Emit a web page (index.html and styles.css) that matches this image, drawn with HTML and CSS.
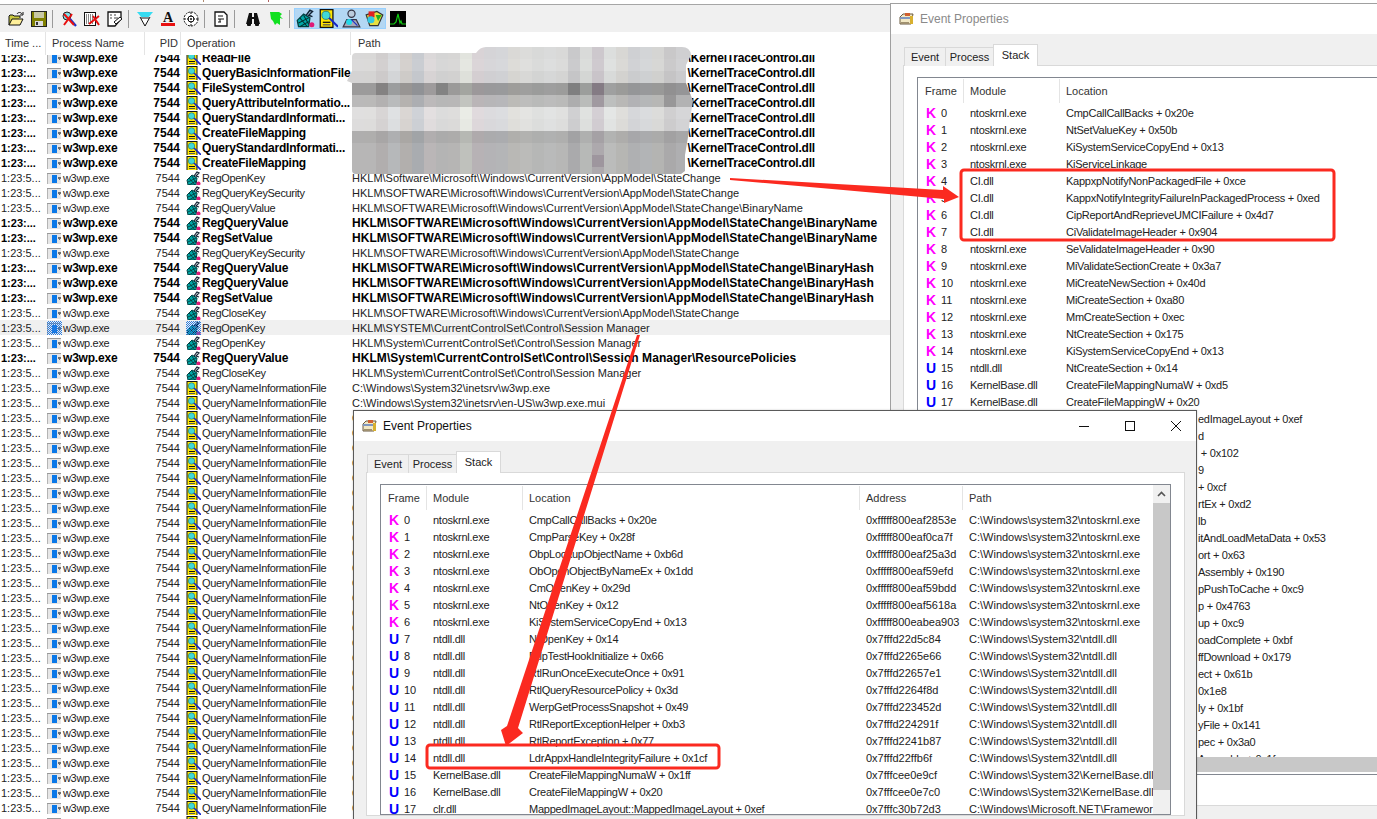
FILE: index.html
```html
<!DOCTYPE html>
<html lang="en">
<head>
<meta charset="utf-8">
<title>Process Monitor</title>
<link rel="stylesheet" href="styles.css">
</head>
<body>
<svg class="defs" aria-hidden="true">
  <symbol id="i-proc" viewBox="0 0 14 11"><rect width="14" height="11" fill="#e6e6e6"/><rect width="14" height="1" fill="#9a9a9a"/><rect y="1" width="1" height="10" fill="#b4b4b4"/><rect x="5" y="2" width="5" height="8" fill="#0a78e8"/><rect x="11" y="4" width="3" height="2" fill="#707070"/><rect x="12" y="6" width="1" height="1" fill="#707070"/></symbol>
  <symbol id="i-reg" viewBox="0 0 15 15"><path d="M1 9 6 4l5 3-1 7H2z" fill="#00a8a8" stroke="#024040"/><path d="M3 7l6 7M6 5l4 7M2 11l8-4M3 14l7-4" stroke="#023030" stroke-width=".8"/><path d="M8 5l3-4 2 1-3 3 3 1" fill="none" stroke="#123" stroke-width="1.2"/><circle cx="12.5" cy="12.5" r="2" fill="#e01a78"/></symbol>
  <symbol id="i-file" viewBox="0 0 15 15"><rect x="1" y=".5" width="10" height="14" fill="#ffe600" stroke="#111"/><circle cx="5.5" cy="5" r="3.2" fill="#3fd8d8" stroke="#2a7a70" stroke-width=".7"/><rect x="3" y="10" width="6" height="1" fill="#111"/><rect x="3" y="12" width="6" height="1" fill="#555"/><path d="M8 7l7 7" stroke="#1426c8" stroke-width="1.6"/></symbol>
  <symbol id="t-open" viewBox="0 0 16 16"><path d="M1 14V5l1-1h3l1 1h6v2" fill="#c9c840" stroke="#111"/><path d="M1 14l3-6h11l-3 6z" fill="#fff09a" stroke="#111"/><path d="M9 3c1-2 4-2 5 0" fill="none" stroke="#111"/><path d="M15 1v3h-3" fill="none" stroke="#111"/></symbol>
  <symbol id="t-save" viewBox="0 0 16 16"><rect x=".5" y=".5" width="15" height="15" fill="#808000" stroke="#222"/><rect x="3" y="1" width="10" height="6" fill="#c8c8a4"/><rect x="4" y="10" width="8" height="5" fill="#dcdcdc"/><rect x="5" y="11" width="2" height="3" fill="#333"/></symbol>
  <symbol id="t-capture" viewBox="0 0 16 16"><circle cx="6" cy="5" r="4" fill="#7fe0e8" stroke="#222"/><path d="M9 8l6 7" stroke="#1a30c8" stroke-width="2.2"/><path d="M3 3l10 11M11 3L3 14" stroke="#e81010" stroke-width="2"/></symbol>
  <symbol id="t-scroll" viewBox="0 0 16 16"><rect x=".5" y="1.5" width="11" height="13" fill="#fff" stroke="#111"/><path d="M2 4h8M2 6h8M2 8h8M2 10h7M2 12h7" stroke="#111" stroke-dasharray="1 1"/><path d="M5 13l10-8M9 5l6 9" stroke="#e81010" stroke-width="2"/></symbol>
  <symbol id="t-clear" viewBox="0 0 16 16"><path d="M1 1h13v7l-6 7H1z" fill="#fff" stroke="#111" stroke-width="1.3"/><path d="M3 4h2M7 4h2M3 7h2M7 7h4" stroke="#444"/><path d="M7 11l6-5 2 2-6 5z" fill="#fff" stroke="#111"/></symbol>
  <symbol id="t-filter" viewBox="0 0 16 16"><path d="M0 1h16l-5 6H5z" fill="#36dcf2"/><path d="M3 6l5 9 5-9" fill="#fff" stroke="#111"/><path d="M4 7h8" stroke="#111"/></symbol>
  <symbol id="t-high" viewBox="0 0 16 16"><text x="8" y="11" text-anchor="middle" class="svg-a">A</text><rect x="1" y="12" width="14" height="3" fill="#e81010"/></symbol>
  <symbol id="t-target" viewBox="0 0 16 16"><circle cx="8" cy="8" r="7" fill="#fff" stroke="#111" stroke-dasharray="2 1"/><circle cx="8" cy="8" r="3" fill="none" stroke="#111"/><path d="M8 1v14M1 8h14" stroke="#111" stroke-dasharray="2 1"/></symbol>
  <symbol id="t-doc" viewBox="0 0 16 16"><path d="M2 1h9l3 3v11H2z" fill="#fff" stroke="#111" stroke-width="1.3"/><path d="M5 5h5M5 8h6M5 11h3M7 8v3" stroke="#111"/></symbol>
  <symbol id="t-bino" viewBox="0 0 16 16"><path d="M4 2h3v4h2V2h3l3 11h-6V8H7v5H1z" fill="#111"/><rect x="2" y="12" width="4" height="3" fill="#111" rx="1"/><rect x="10" y="12" width="4" height="3" fill="#111" rx="1"/></symbol>
  <symbol id="t-jump" viewBox="0 0 16 16"><path d="M2 1h9l3 2-2 2 3 3-3-1v7l-3-2-2 2-2-4-2-2z" fill="#10e020"/></symbol>
  <symbol id="t-net" viewBox="0 0 16 16"><path d="M1 15l3-6h8l3 6z" fill="#a8a8b8" stroke="#334"/><rect x="5" y="1" width="6" height="6" rx="3" fill="#bcd" stroke="#334"/><circle cx="6" cy="11" r="2.5" fill="#22d8e8"/><path d="M8 9l5 5" stroke="#1a30c8"/></symbol>
  <symbol id="t-proc" viewBox="0 0 16 16"><path d="M1 5l9-3 5 3-4 9H4z" fill="#e8e040" stroke="#333"/><rect x="3" y="2" width="5" height="5" fill="#e02020"/><circle cx="5" cy="9" r="3" fill="#30c8e0"/><path d="M9 5l5 0-3 5z" fill="#20b020"/></symbol>
  <symbol id="t-graph" viewBox="0 0 16 16"><rect width="16" height="16" fill="#000"/><path d="M0 13h4l2-2 2-8 2 9 1-2 1 3h4" fill="none" stroke="#10c810" stroke-width="1.2"/></symbol>
  <symbol id="i-title" viewBox="0 0 15 13"><path d="M1 4l3-3h10l-2 10H1z" fill="#f2e8c4" stroke="#6a5a40"/><rect x="1" y="4" width="10" height="2" fill="#8098c0"/><rect x="6" y="0" width="5" height="3" fill="#d06030"/><rect x="11" y="3" width="3" height="8" fill="#d8b030"/><rect x="2" y="9" width="8" height="2" fill="#a09070"/></symbol>
</svg>

<div class="desk">
  <section class="procmon">
    <div class="strip"><i class="mark m1"></i><i class="mark m2"></i></div>
    <div class="toolbar">
      <span class="btn"><svg class="tb"><use href="#t-open"/></svg></span>
      <span class="btn"><svg class="tb"><use href="#t-save"/></svg></span>
      <i class="sep"></i>
      <span class="btn"><svg class="tb"><use href="#t-capture"/></svg></span>
      <span class="btn"><svg class="tb"><use href="#t-scroll"/></svg></span>
      <span class="btn"><svg class="tb"><use href="#t-clear"/></svg></span>
      <i class="sep"></i>
      <span class="btn"><svg class="tb"><use href="#t-filter"/></svg></span>
      <span class="btn"><svg class="tb"><use href="#t-high"/></svg></span>
      <span class="btn"><svg class="tb"><use href="#t-target"/></svg></span>
      <i class="sep"></i>
      <span class="btn"><svg class="tb"><use href="#t-doc"/></svg></span>
      <i class="sep sep-wide"></i>
      <span class="btn"><svg class="tb"><use href="#t-bino"/></svg></span>
      <span class="btn"><svg class="tb"><use href="#t-jump"/></svg></span>
      <i class="sep"></i>
      <span class="group">
        <span class="btn on"><svg class="tb"><use href="#i-reg"/></svg></span>
        <span class="btn on"><svg class="tb"><use href="#i-file"/></svg></span>
        <span class="btn on"><svg class="tb"><use href="#t-net"/></svg></span>
        <span class="btn on"><svg class="tb"><use href="#t-proc"/></svg></span>
      </span>
      <span class="btn"><svg class="tb"><use href="#t-graph"/></svg></span>
    </div>
    <div class="head">
      <span class="h-time">Time ...</span><span class="h-proc">Process Name</span><span class="h-pid">PID</span><span class="h-op">Operation</span><span class="h-path">Path</span>
    </div>
    <div class="list">
      <div class="rows">
        <div class="row b"><span class="time">1:23:...</span><span class="proc"><svg class="ic-p"><use href="#i-proc"/></svg>w3wp.exe</span><span class="pid">7544</span><span class="op"><svg class="ic-o"><use href="#i-file"/></svg>ReadFile</span><span class="path tail">\KernelTraceControl.dll</span></div>
        <div class="row b"><span class="time">1:23:...</span><span class="proc"><svg class="ic-p"><use href="#i-proc"/></svg>w3wp.exe</span><span class="pid">7544</span><span class="op"><svg class="ic-o"><use href="#i-file"/></svg>QueryBasicInformationFile</span><span class="path tail">\KernelTraceControl.dll</span></div>
        <div class="row b"><span class="time">1:23:...</span><span class="proc"><svg class="ic-p"><use href="#i-proc"/></svg>w3wp.exe</span><span class="pid">7544</span><span class="op"><svg class="ic-o"><use href="#i-file"/></svg>FileSystemControl</span><span class="path tail">\KernelTraceControl.dll</span></div>
        <div class="row b"><span class="time">1:23:...</span><span class="proc"><svg class="ic-p"><use href="#i-proc"/></svg>w3wp.exe</span><span class="pid">7544</span><span class="op"><svg class="ic-o"><use href="#i-file"/></svg>QueryAttributeInformatio...</span><span class="path tail">\KernelTraceControl.dll</span></div>
        <div class="row b"><span class="time">1:23:...</span><span class="proc"><svg class="ic-p"><use href="#i-proc"/></svg>w3wp.exe</span><span class="pid">7544</span><span class="op"><svg class="ic-o"><use href="#i-file"/></svg>QueryStandardInformati...</span><span class="path tail">\KernelTraceControl.dll</span></div>
        <div class="row b"><span class="time">1:23:...</span><span class="proc"><svg class="ic-p"><use href="#i-proc"/></svg>w3wp.exe</span><span class="pid">7544</span><span class="op"><svg class="ic-o"><use href="#i-file"/></svg>CreateFileMapping</span><span class="path tail">\KernelTraceControl.dll</span></div>
        <div class="row b"><span class="time">1:23:...</span><span class="proc"><svg class="ic-p"><use href="#i-proc"/></svg>w3wp.exe</span><span class="pid">7544</span><span class="op"><svg class="ic-o"><use href="#i-file"/></svg>QueryStandardInformati...</span><span class="path tail">\KernelTraceControl.dll</span></div>
        <div class="row b"><span class="time">1:23:...</span><span class="proc"><svg class="ic-p"><use href="#i-proc"/></svg>w3wp.exe</span><span class="pid">7544</span><span class="op"><svg class="ic-o"><use href="#i-file"/></svg>CreateFileMapping</span><span class="path tail">\KernelTraceControl.dll</span></div>
        <div class="row"><span class="time">1:23:5...</span><span class="proc"><svg class="ic-p"><use href="#i-proc"/></svg>w3wp.exe</span><span class="pid">7544</span><span class="op"><svg class="ic-o"><use href="#i-reg"/></svg>RegOpenKey</span><span class="path">HKLM\Software\Microsoft\Windows\CurrentVersion\AppModel\StateChange</span></div>
        <div class="row"><span class="time">1:23:5...</span><span class="proc"><svg class="ic-p"><use href="#i-proc"/></svg>w3wp.exe</span><span class="pid">7544</span><span class="op"><svg class="ic-o"><use href="#i-reg"/></svg>RegQueryKeySecurity</span><span class="path">HKLM\SOFTWARE\Microsoft\Windows\CurrentVersion\AppModel\StateChange</span></div>
        <div class="row"><span class="time">1:23:5...</span><span class="proc"><svg class="ic-p"><use href="#i-proc"/></svg>w3wp.exe</span><span class="pid">7544</span><span class="op"><svg class="ic-o"><use href="#i-reg"/></svg>RegQueryValue</span><span class="path">HKLM\SOFTWARE\Microsoft\Windows\CurrentVersion\AppModel\StateChange\BinaryName</span></div>
        <div class="row b"><span class="time">1:23:...</span><span class="proc"><svg class="ic-p"><use href="#i-proc"/></svg>w3wp.exe</span><span class="pid">7544</span><span class="op"><svg class="ic-o"><use href="#i-reg"/></svg>RegQueryValue</span><span class="path">HKLM\SOFTWARE\Microsoft\Windows\CurrentVersion\AppModel\StateChange\BinaryName</span></div>
        <div class="row b"><span class="time">1:23:...</span><span class="proc"><svg class="ic-p"><use href="#i-proc"/></svg>w3wp.exe</span><span class="pid">7544</span><span class="op"><svg class="ic-o"><use href="#i-reg"/></svg>RegSetValue</span><span class="path">HKLM\SOFTWARE\Microsoft\Windows\CurrentVersion\AppModel\StateChange\BinaryName</span></div>
        <div class="row"><span class="time">1:23:5...</span><span class="proc"><svg class="ic-p"><use href="#i-proc"/></svg>w3wp.exe</span><span class="pid">7544</span><span class="op"><svg class="ic-o"><use href="#i-reg"/></svg>RegQueryKeySecurity</span><span class="path">HKLM\SOFTWARE\Microsoft\Windows\CurrentVersion\AppModel\StateChange</span></div>
        <div class="row b"><span class="time">1:23:...</span><span class="proc"><svg class="ic-p"><use href="#i-proc"/></svg>w3wp.exe</span><span class="pid">7544</span><span class="op"><svg class="ic-o"><use href="#i-reg"/></svg>RegQueryValue</span><span class="path">HKLM\SOFTWARE\Microsoft\Windows\CurrentVersion\AppModel\StateChange\BinaryHash</span></div>
        <div class="row b"><span class="time">1:23:...</span><span class="proc"><svg class="ic-p"><use href="#i-proc"/></svg>w3wp.exe</span><span class="pid">7544</span><span class="op"><svg class="ic-o"><use href="#i-reg"/></svg>RegQueryValue</span><span class="path">HKLM\SOFTWARE\Microsoft\Windows\CurrentVersion\AppModel\StateChange\BinaryHash</span></div>
        <div class="row b"><span class="time">1:23:...</span><span class="proc"><svg class="ic-p"><use href="#i-proc"/></svg>w3wp.exe</span><span class="pid">7544</span><span class="op"><svg class="ic-o"><use href="#i-reg"/></svg>RegSetValue</span><span class="path">HKLM\SOFTWARE\Microsoft\Windows\CurrentVersion\AppModel\StateChange\BinaryHash</span></div>
        <div class="row"><span class="time">1:23:5...</span><span class="proc"><svg class="ic-p"><use href="#i-proc"/></svg>w3wp.exe</span><span class="pid">7544</span><span class="op"><svg class="ic-o"><use href="#i-reg"/></svg>RegCloseKey</span><span class="path">HKLM\SOFTWARE\Microsoft\Windows\CurrentVersion\AppModel\StateChange</span></div>
        <div class="row hl"><span class="time">1:23:5...</span><span class="proc"><span class="dither"><svg class="ic-p"><use href="#i-proc"/></svg></span>w3wp.exe</span><span class="pid">7544</span><span class="op"><span class="dither"><svg class="ic-o"><use href="#i-reg"/></svg></span>RegOpenKey</span><span class="path">HKLM\SYSTEM\CurrentControlSet\Control\Session Manager</span></div>
        <div class="row"><span class="time">1:23:5...</span><span class="proc"><svg class="ic-p"><use href="#i-proc"/></svg>w3wp.exe</span><span class="pid">7544</span><span class="op"><svg class="ic-o"><use href="#i-reg"/></svg>RegOpenKey</span><span class="path">HKLM\System\CurrentControlSet\Control\Session Manager</span></div>
        <div class="row b"><span class="time">1:23:...</span><span class="proc"><svg class="ic-p"><use href="#i-proc"/></svg>w3wp.exe</span><span class="pid">7544</span><span class="op"><svg class="ic-o"><use href="#i-reg"/></svg>RegQueryValue</span><span class="path">HKLM\System\CurrentControlSet\Control\Session Manager\ResourcePolicies</span></div>
        <div class="row"><span class="time">1:23:5...</span><span class="proc"><svg class="ic-p"><use href="#i-proc"/></svg>w3wp.exe</span><span class="pid">7544</span><span class="op"><svg class="ic-o"><use href="#i-reg"/></svg>RegCloseKey</span><span class="path">HKLM\System\CurrentControlSet\Control\Session Manager</span></div>
        <div class="row"><span class="time">1:23:5...</span><span class="proc"><svg class="ic-p"><use href="#i-proc"/></svg>w3wp.exe</span><span class="pid">7544</span><span class="op"><svg class="ic-o"><use href="#i-file"/></svg>QueryNameInformationFile</span><span class="path">C:\Windows\System32\inetsrv\w3wp.exe</span></div>
        <div class="row"><span class="time">1:23:5...</span><span class="proc"><svg class="ic-p"><use href="#i-proc"/></svg>w3wp.exe</span><span class="pid">7544</span><span class="op"><svg class="ic-o"><use href="#i-file"/></svg>QueryNameInformationFile</span><span class="path">C:\Windows\System32\inetsrv\en-US\w3wp.exe.mui</span></div>
        <div class="row"><span class="time">1:23:5...</span><span class="proc"><svg class="ic-p"><use href="#i-proc"/></svg>w3wp.exe</span><span class="pid">7544</span><span class="op"><svg class="ic-o"><use href="#i-file"/></svg>QueryNameInformationFile</span><span class="path">C:</span></div>
        <div class="row"><span class="time">1:23:5...</span><span class="proc"><svg class="ic-p"><use href="#i-proc"/></svg>w3wp.exe</span><span class="pid">7544</span><span class="op"><svg class="ic-o"><use href="#i-file"/></svg>QueryNameInformationFile</span><span class="path">C:</span></div>
        <div class="row"><span class="time">1:23:5...</span><span class="proc"><svg class="ic-p"><use href="#i-proc"/></svg>w3wp.exe</span><span class="pid">7544</span><span class="op"><svg class="ic-o"><use href="#i-file"/></svg>QueryNameInformationFile</span><span class="path">C:</span></div>
        <div class="row"><span class="time">1:23:5...</span><span class="proc"><svg class="ic-p"><use href="#i-proc"/></svg>w3wp.exe</span><span class="pid">7544</span><span class="op"><svg class="ic-o"><use href="#i-file"/></svg>QueryNameInformationFile</span><span class="path">C:</span></div>
        <div class="row"><span class="time">1:23:5...</span><span class="proc"><svg class="ic-p"><use href="#i-proc"/></svg>w3wp.exe</span><span class="pid">7544</span><span class="op"><svg class="ic-o"><use href="#i-file"/></svg>QueryNameInformationFile</span><span class="path">C:</span></div>
        <div class="row"><span class="time">1:23:5...</span><span class="proc"><svg class="ic-p"><use href="#i-proc"/></svg>w3wp.exe</span><span class="pid">7544</span><span class="op"><svg class="ic-o"><use href="#i-file"/></svg>QueryNameInformationFile</span><span class="path">C:</span></div>
        <div class="row"><span class="time">1:23:5...</span><span class="proc"><svg class="ic-p"><use href="#i-proc"/></svg>w3wp.exe</span><span class="pid">7544</span><span class="op"><svg class="ic-o"><use href="#i-file"/></svg>QueryNameInformationFile</span><span class="path">C:</span></div>
        <div class="row"><span class="time">1:23:5...</span><span class="proc"><svg class="ic-p"><use href="#i-proc"/></svg>w3wp.exe</span><span class="pid">7544</span><span class="op"><svg class="ic-o"><use href="#i-file"/></svg>QueryNameInformationFile</span><span class="path">C:</span></div>
        <div class="row"><span class="time">1:23:5...</span><span class="proc"><svg class="ic-p"><use href="#i-proc"/></svg>w3wp.exe</span><span class="pid">7544</span><span class="op"><svg class="ic-o"><use href="#i-file"/></svg>QueryNameInformationFile</span><span class="path">C:</span></div>
        <div class="row"><span class="time">1:23:5...</span><span class="proc"><svg class="ic-p"><use href="#i-proc"/></svg>w3wp.exe</span><span class="pid">7544</span><span class="op"><svg class="ic-o"><use href="#i-file"/></svg>QueryNameInformationFile</span><span class="path">C:</span></div>
        <div class="row"><span class="time">1:23:5...</span><span class="proc"><svg class="ic-p"><use href="#i-proc"/></svg>w3wp.exe</span><span class="pid">7544</span><span class="op"><svg class="ic-o"><use href="#i-file"/></svg>QueryNameInformationFile</span><span class="path">C:</span></div>
        <div class="row"><span class="time">1:23:5...</span><span class="proc"><svg class="ic-p"><use href="#i-proc"/></svg>w3wp.exe</span><span class="pid">7544</span><span class="op"><svg class="ic-o"><use href="#i-file"/></svg>QueryNameInformationFile</span><span class="path">C:</span></div>
        <div class="row"><span class="time">1:23:5...</span><span class="proc"><svg class="ic-p"><use href="#i-proc"/></svg>w3wp.exe</span><span class="pid">7544</span><span class="op"><svg class="ic-o"><use href="#i-file"/></svg>QueryNameInformationFile</span><span class="path">C:</span></div>
        <div class="row"><span class="time">1:23:5...</span><span class="proc"><svg class="ic-p"><use href="#i-proc"/></svg>w3wp.exe</span><span class="pid">7544</span><span class="op"><svg class="ic-o"><use href="#i-file"/></svg>QueryNameInformationFile</span><span class="path">C:</span></div>
        <div class="row"><span class="time">1:23:5...</span><span class="proc"><svg class="ic-p"><use href="#i-proc"/></svg>w3wp.exe</span><span class="pid">7544</span><span class="op"><svg class="ic-o"><use href="#i-file"/></svg>QueryNameInformationFile</span><span class="path">C:</span></div>
        <div class="row"><span class="time">1:23:5...</span><span class="proc"><svg class="ic-p"><use href="#i-proc"/></svg>w3wp.exe</span><span class="pid">7544</span><span class="op"><svg class="ic-o"><use href="#i-file"/></svg>QueryNameInformationFile</span><span class="path">C:</span></div>
        <div class="row"><span class="time">1:23:5...</span><span class="proc"><svg class="ic-p"><use href="#i-proc"/></svg>w3wp.exe</span><span class="pid">7544</span><span class="op"><svg class="ic-o"><use href="#i-file"/></svg>QueryNameInformationFile</span><span class="path">C:</span></div>
        <div class="row"><span class="time">1:23:5...</span><span class="proc"><svg class="ic-p"><use href="#i-proc"/></svg>w3wp.exe</span><span class="pid">7544</span><span class="op"><svg class="ic-o"><use href="#i-file"/></svg>QueryNameInformationFile</span><span class="path">C:</span></div>
        <div class="row"><span class="time">1:23:5...</span><span class="proc"><svg class="ic-p"><use href="#i-proc"/></svg>w3wp.exe</span><span class="pid">7544</span><span class="op"><svg class="ic-o"><use href="#i-file"/></svg>QueryNameInformationFile</span><span class="path">C:</span></div>
        <div class="row"><span class="time">1:23:5...</span><span class="proc"><svg class="ic-p"><use href="#i-proc"/></svg>w3wp.exe</span><span class="pid">7544</span><span class="op"><svg class="ic-o"><use href="#i-file"/></svg>QueryNameInformationFile</span><span class="path">C:</span></div>
        <div class="row"><span class="time">1:23:5...</span><span class="proc"><svg class="ic-p"><use href="#i-proc"/></svg>w3wp.exe</span><span class="pid">7544</span><span class="op"><svg class="ic-o"><use href="#i-file"/></svg>QueryNameInformationFile</span><span class="path">C:</span></div>
        <div class="row"><span class="time">1:23:5...</span><span class="proc"><svg class="ic-p"><use href="#i-proc"/></svg>w3wp.exe</span><span class="pid">7544</span><span class="op"><svg class="ic-o"><use href="#i-file"/></svg>QueryNameInformationFile</span><span class="path">C:</span></div>
        <div class="row"><span class="time">1:23:5...</span><span class="proc"><svg class="ic-p"><use href="#i-proc"/></svg>w3wp.exe</span><span class="pid">7544</span><span class="op"><svg class="ic-o"><use href="#i-file"/></svg>QueryNameInformationFile</span><span class="path">C:</span></div>
        <div class="row"><span class="time">1:23:5...</span><span class="proc"><svg class="ic-p"><use href="#i-proc"/></svg>w3wp.exe</span><span class="pid">7544</span><span class="op"><svg class="ic-o"><use href="#i-file"/></svg>QueryNameInformationFile</span><span class="path">C:</span></div>
        <div class="row"><span class="time">1:23:5...</span><span class="proc"><svg class="ic-p"><use href="#i-proc"/></svg>w3wp.exe</span><span class="pid">7544</span><span class="op"><svg class="ic-o"><use href="#i-file"/></svg>QueryNameInformationFile</span><span class="path">C:</span></div>
        <div class="row"><span class="time">1:23:5...</span><span class="proc"><svg class="ic-p"><use href="#i-proc"/></svg>w3wp.exe</span><span class="pid">7544</span><span class="op"><svg class="ic-o"><use href="#i-file"/></svg>QueryNameInformationFile</span><span class="path">C:</span></div>
        <div class="row"><span class="time">1:23:5...</span><span class="proc"><svg class="ic-p"><use href="#i-proc"/></svg>w3wp.exe</span><span class="pid">7544</span><span class="op"><svg class="ic-o"><use href="#i-file"/></svg>QueryNameInformationFile</span><span class="path">C:</span></div>
        <div class="row"><span class="time">1:23:5...</span><span class="proc"><svg class="ic-p"><use href="#i-proc"/></svg>w3wp.exe</span><span class="pid">7544</span><span class="op"><svg class="ic-o"><use href="#i-file"/></svg>QueryNameInformationFile</span><span class="path">C:</span></div>
      </div>
    </div>
  </section>

  <svg class="mosaic" viewBox="340 40 360 135" aria-hidden="true">
    <defs><clipPath id="blob"><path d="M356 53H476q4-6 10-6H682q8 0 9 8l-5 10 0 18 7 18-3 18-2 18-3 18 0 16-4 3H356q-4 0-4-4V83l-5-2 5-10V57q0-4 4-4z"/></clipPath></defs>
    <g clip-path="url(#blob)" shape-rendering="crispEdges">
      <rect x="340" y="40" width="24" height="135" fill="#e0dfdf"/><rect x="364" y="40" width="12" height="135" fill="#e0dfde"/><rect x="376" y="40" width="12" height="135" fill="#d8d5d5"/><rect x="388" y="40" width="12" height="135" fill="#dfe1e3"/><rect x="400" y="40" width="12" height="135" fill="#dad6d3"/><rect x="412" y="40" width="12" height="135" fill="#cfd2d7"/><rect x="424" y="40" width="12" height="135" fill="#e3dfe0"/><rect x="436" y="40" width="12" height="135" fill="#dcdcdc"/><rect x="448" y="40" width="12" height="135" fill="#dedddc"/><rect x="460" y="40" width="12" height="135" fill="#eaece6"/><rect x="472" y="40" width="12" height="135" fill="#e0dadd"/><rect x="484" y="40" width="12" height="135" fill="#dcdbde"/><rect x="496" y="40" width="12" height="135" fill="#dcdde0"/><rect x="508" y="40" width="12" height="135" fill="#e2e1dd"/><rect x="520" y="40" width="12" height="135" fill="#e4e4e2"/><rect x="532" y="40" width="12" height="135" fill="#dfe0df"/><rect x="544" y="40" width="12" height="135" fill="#e2e3e3"/><rect x="556" y="40" width="12" height="135" fill="#e0e0df"/><rect x="568" y="40" width="12" height="135" fill="#d0d0d2"/><rect x="580" y="40" width="12" height="135" fill="#e0e2e0"/><rect x="592" y="40" width="12" height="135" fill="#d4cfd4"/><rect x="604" y="40" width="12" height="135" fill="#e4e6e5"/><rect x="616" y="40" width="12" height="135" fill="#dfdedb"/><rect x="628" y="40" width="12" height="135" fill="#d6d7da"/><rect x="640" y="40" width="12" height="135" fill="#dadcde"/><rect x="652" y="40" width="12" height="135" fill="#dcdcda"/><rect x="664" y="40" width="12" height="135" fill="#d0cfd0"/><rect x="676" y="40" width="24" height="135" fill="#d6d6d8"/>
      <rect x="340" y="40" width="360" height="19" fill="#000" opacity=".03"/><rect x="340" y="59" width="360" height="12" fill="#000" opacity=".02"/><rect x="340" y="71" width="360" height="12" fill="#000" opacity=".05"/><rect x="340" y="83" width="360" height="12" fill="#000" opacity=".3"/><rect x="340" y="95" width="360" height="12" fill="#000" opacity=".17"/><rect x="340" y="119" width="360" height="12" fill="#000" opacity=".01"/><rect x="340" y="131" width="360" height="12" fill="#000" opacity=".22"/><rect x="340" y="143" width="360" height="32" fill="#000" opacity=".18"/>
      <rect x="376" y="83" width="12" height="12" fill="#000" opacity=".12"/><rect x="436" y="83" width="12" height="12" fill="#000" opacity=".14"/><rect x="568" y="83" width="12" height="12" fill="#000" opacity=".12"/><rect x="592" y="83" width="12" height="12" fill="#301030" opacity=".16"/><rect x="592" y="95" width="12" height="12" fill="#301030" opacity=".12"/><rect x="664" y="95" width="12" height="12" fill="#000" opacity=".12"/><rect x="592" y="155" width="12" height="12" fill="#301030" opacity=".12"/>
    </g>
  </svg>

  <section class="win w1">
    <div class="titlebar inactive"><svg class="ti"><use href="#i-title"/></svg><span>Event Properties</span></div>
    <div class="body">
      <div class="tabs"><span class="tab t-ev">Event</span><span class="tab t-pr">Process</span><span class="tab t-st active">Stack</span></div>
      <div class="panel">
        <div class="slist">
          <div class="shead"><span>Frame</span><span>Module</span><span>Location</span></div>
          <div class="srows">
            <div class="srow"><span><b class="k">K</b>0</span><span>ntoskrnl.exe</span><span>CmpCallCallBacks + 0x20e</span></div>
            <div class="srow"><span><b class="k">K</b>1</span><span>ntoskrnl.exe</span><span>NtSetValueKey + 0x50b</span></div>
            <div class="srow"><span><b class="k">K</b>2</span><span>ntoskrnl.exe</span><span>KiSystemServiceCopyEnd + 0x13</span></div>
            <div class="srow"><span><b class="k">K</b>3</span><span>ntoskrnl.exe</span><span>KiServiceLinkage</span></div>
            <div class="srow"><span><b class="k">K</b>4</span><span>CI.dll</span><span>KappxpNotifyNonPackagedFile + 0xce</span></div>
            <div class="srow"><span><b class="k">K</b>5</span><span>CI.dll</span><span>KappxNotifyIntegrityFailureInPackagedProcess + 0xed</span></div>
            <div class="srow"><span><b class="k">K</b>6</span><span>CI.dll</span><span>CipReportAndReprieveUMCIFailure + 0x4d7</span></div>
            <div class="srow"><span><b class="k">K</b>7</span><span>CI.dll</span><span>CiValidateImageHeader + 0x904</span></div>
            <div class="srow"><span><b class="k">K</b>8</span><span>ntoskrnl.exe</span><span>SeValidateImageHeader + 0x90</span></div>
            <div class="srow"><span><b class="k">K</b>9</span><span>ntoskrnl.exe</span><span>MiValidateSectionCreate + 0x3a7</span></div>
            <div class="srow"><span><b class="k">K</b>10</span><span>ntoskrnl.exe</span><span>MiCreateNewSection + 0x40d</span></div>
            <div class="srow"><span><b class="k">K</b>11</span><span>ntoskrnl.exe</span><span>MiCreateSection + 0xa80</span></div>
            <div class="srow"><span><b class="k">K</b>12</span><span>ntoskrnl.exe</span><span>MmCreateSection + 0xec</span></div>
            <div class="srow"><span><b class="k">K</b>13</span><span>ntoskrnl.exe</span><span>NtCreateSection + 0x175</span></div>
            <div class="srow"><span><b class="k">K</b>14</span><span>ntoskrnl.exe</span><span>KiSystemServiceCopyEnd + 0x13</span></div>
            <div class="srow"><span><b class="u">U</b>15</span><span>ntdll.dll</span><span>NtCreateSection + 0x14</span></div>
            <div class="srow"><span><b class="u">U</b>16</span><span>KernelBase.dll</span><span>CreateFileMappingNumaW + 0xd5</span></div>
            <div class="srow"><span><b class="u">U</b>17</span><span>KernelBase.dll</span><span>CreateFileMappingW + 0x20</span></div>
            <div class="srow"><span></span><span></span><span class="clip">edImageLayout + 0xef</span></div>
            <div class="srow"><span></span><span></span><span class="clip">d</span></div>
            <div class="srow"><span></span><span></span><span class="clip"> + 0x102</span></div>
            <div class="srow"><span></span><span></span><span class="clip">9</span></div>
            <div class="srow"><span></span><span></span><span class="clip">+ 0xcf</span></div>
            <div class="srow"><span></span><span></span><span class="clip">rtEx + 0xd2</span></div>
            <div class="srow"><span></span><span></span><span class="clip">lb</span></div>
            <div class="srow"><span></span><span></span><span class="clip">itAndLoadMetaData + 0x53</span></div>
            <div class="srow"><span></span><span></span><span class="clip">ort + 0x63</span></div>
            <div class="srow"><span></span><span></span><span class="clip">Assembly + 0x190</span></div>
            <div class="srow"><span></span><span></span><span class="clip">pPushToCache + 0xc9</span></div>
            <div class="srow"><span></span><span></span><span class="clip">p + 0x4763</span></div>
            <div class="srow"><span></span><span></span><span class="clip">up + 0xc9</span></div>
            <div class="srow"><span></span><span></span><span class="clip">oadComplete + 0xbf</span></div>
            <div class="srow"><span></span><span></span><span class="clip">ffDownload + 0x179</span></div>
            <div class="srow"><span></span><span></span><span class="clip">ect + 0x61b</span></div>
            <div class="srow"><span></span><span></span><span class="clip">0x1e8</span></div>
            <div class="srow"><span></span><span></span><span class="clip">ly + 0x1bf</span></div>
            <div class="srow"><span></span><span></span><span class="clip">yFile + 0x141</span></div>
            <div class="srow"><span></span><span></span><span class="clip">pec + 0x3a0</span></div>
            <div class="srow"><span></span><span></span><span class="clip">Assembly + 0x1f</span></div>
          </div>
          <div class="hscroll"></div>
        </div>
      </div>
    </div>
  </section>

  <section class="win w2">
    <div class="titlebar">
      <svg class="ti"><use href="#i-title"/></svg><span>Event Properties</span>
      <div class="controls">
        <span class="ctl"><svg class="gl" viewBox="0 0 10 10"><path d="M0 5.5h10" stroke="#111"/></svg></span>
        <span class="ctl"><svg class="gl" viewBox="0 0 10 10"><rect x=".5" y=".5" width="9" height="9" fill="none" stroke="#111"/></svg></span>
        <span class="ctl"><svg class="gl" viewBox="0 0 10 10"><path d="M0 0l10 10M10 0L0 10" stroke="#111"/></svg></span>
      </div>
    </div>
    <div class="body">
      <div class="tabs"><span class="tab t-ev">Event</span><span class="tab t-pr">Process</span><span class="tab t-st active">Stack</span></div>
      <div class="panel">
        <div class="slist with-bar">
          <div class="main">
            <div class="shead"><span>Frame</span><span>Module</span><span>Location</span><span>Address</span><span>Path</span></div>
            <div class="srows">
              <div class="srow"><span><b class="k">K</b>0</span><span>ntoskrnl.exe</span><span>CmpCallCallBacks + 0x20e</span><span>0xfffff800eaf2853e</span><span>C:\Windows\system32\ntoskrnl.exe</span></div>
              <div class="srow"><span><b class="k">K</b>1</span><span>ntoskrnl.exe</span><span>CmpParseKey + 0x28f</span><span>0xfffff800eaf0ca7f</span><span>C:\Windows\system32\ntoskrnl.exe</span></div>
              <div class="srow"><span><b class="k">K</b>2</span><span>ntoskrnl.exe</span><span>ObpLookupObjectName + 0xb6d</span><span>0xfffff800eaf25a3d</span><span>C:\Windows\system32\ntoskrnl.exe</span></div>
              <div class="srow"><span><b class="k">K</b>3</span><span>ntoskrnl.exe</span><span>ObOpenObjectByNameEx + 0x1dd</span><span>0xfffff800eaf59efd</span><span>C:\Windows\system32\ntoskrnl.exe</span></div>
              <div class="srow"><span><b class="k">K</b>4</span><span>ntoskrnl.exe</span><span>CmOpenKey + 0x29d</span><span>0xfffff800eaf59bdd</span><span>C:\Windows\system32\ntoskrnl.exe</span></div>
              <div class="srow"><span><b class="k">K</b>5</span><span>ntoskrnl.exe</span><span>NtOpenKey + 0x12</span><span>0xfffff800eaf5618a</span><span>C:\Windows\system32\ntoskrnl.exe</span></div>
              <div class="srow"><span><b class="k">K</b>6</span><span>ntoskrnl.exe</span><span>KiSystemServiceCopyEnd + 0x13</span><span>0xfffff800eabea903</span><span>C:\Windows\system32\ntoskrnl.exe</span></div>
              <div class="srow"><span><b class="u">U</b>7</span><span>ntdll.dll</span><span>NtOpenKey + 0x14</span><span>0x7fffd22d5c84</span><span>C:\Windows\System32\ntdll.dll</span></div>
              <div class="srow"><span><b class="u">U</b>8</span><span>ntdll.dll</span><span>RtlpTestHookInitialize + 0x66</span><span>0x7fffd2265e66</span><span>C:\Windows\System32\ntdll.dll</span></div>
              <div class="srow"><span><b class="u">U</b>9</span><span>ntdll.dll</span><span>RtlRunOnceExecuteOnce + 0x91</span><span>0x7fffd22657e1</span><span>C:\Windows\System32\ntdll.dll</span></div>
              <div class="srow"><span><b class="u">U</b>10</span><span>ntdll.dll</span><span>RtlQueryResourcePolicy + 0x3d</span><span>0x7fffd2264f8d</span><span>C:\Windows\System32\ntdll.dll</span></div>
              <div class="srow"><span><b class="u">U</b>11</span><span>ntdll.dll</span><span>WerpGetProcessSnapshot + 0x49</span><span>0x7fffd223452d</span><span>C:\Windows\System32\ntdll.dll</span></div>
              <div class="srow"><span><b class="u">U</b>12</span><span>ntdll.dll</span><span>RtlReportExceptionHelper + 0xb3</span><span>0x7fffd224291f</span><span>C:\Windows\System32\ntdll.dll</span></div>
              <div class="srow"><span><b class="u">U</b>13</span><span>ntdll.dll</span><span>RtlReportException + 0x77</span><span>0x7fffd2241b87</span><span>C:\Windows\System32\ntdll.dll</span></div>
              <div class="srow"><span><b class="u">U</b>14</span><span>ntdll.dll</span><span>LdrAppxHandleIntegrityFailure + 0x1cf</span><span>0x7fffd22ffb6f</span><span>C:\Windows\System32\ntdll.dll</span></div>
              <div class="srow"><span><b class="u">U</b>15</span><span>KernelBase.dll</span><span>CreateFileMappingNumaW + 0x1ff</span><span>0x7fffcee0e9cf</span><span>C:\Windows\System32\KernelBase.dll</span></div>
              <div class="srow"><span><b class="u">U</b>16</span><span>KernelBase.dll</span><span>CreateFileMappingW + 0x20</span><span>0x7fffcee0e7c0</span><span>C:\Windows\System32\KernelBase.dll</span></div>
              <div class="srow"><span><b class="u">U</b>17</span><span>clr.dll</span><span>MappedImageLayout::MappedImageLayout + 0xef</span><span>0x7fffc30b72d3</span><span>C:\Windows\Microsoft.NET\Framework64\v4.0.30319\clr.dll</span></div>
            </div>
          </div>
          <div class="vscroll"><span class="up"><svg class="chev" viewBox="0 0 9 6"><path d="M1 5l3.5-3.5L8 5" fill="none" stroke="#555" stroke-width="1.6"/></svg></span><span class="thumb"></span></div>
        </div>
      </div>
    </div>
  </section>

  <svg class="marks" viewBox="0 0 1377 819" aria-hidden="true">
    <rect class="box" x="961" y="170" width="373" height="70" rx="3"/>
    <rect class="box" x="427" y="745" width="292" height="23" rx="3"/>
    <polygon class="arrow" points="730,178 943,190 943,186 959,197 944,203 944,199 730,180"/>
    <polygon class="arrow" points="637,335 640,335 518,728 523,733 506,746 501,730 507,726"/>
  </svg>
</div>
</body>
</html>
```

FILE: styles.css
```css
* { box-sizing: border-box; }
html, body { margin: 0; padding: 0; background: #fff; }
body { font: 11px/15px "Liberation Sans", Arial, sans-serif; color: #111; }
.defs { position: absolute; width: 0; height: 0; }
.desk { position: relative; width: 1377px; height: 819px; overflow: hidden; background: #fff; }

/* Process Monitor */
.procmon { width: 890px; height: 819px; display: flex; flex-direction: column; }
.strip { position: relative; height: 5px; background: #fff; border-bottom: 1px solid #a6a6a6; flex: none; }
.mark { position: absolute; top: 0; width: 1px; height: 2px; background: #b08a70; }
.m1 { left: 203px; }
.m2 { left: 268px; background: #b06060; }
.toolbar { height: 27px; flex: none; background: #f0f0f0; display: flex; align-items: center; padding-left: 4px; }
.btn { width: 23px; height: 21px; display: flex; align-items: center; justify-content: center; flex: none; }
.tb { width: 16px; height: 16px; display: block; }
.btn.on .tb { width: 19px; height: 19px; }
.sep { width: 7px; height: 18px; flex: none; position: relative; }
.sep::before { content: ""; position: absolute; left: 2px; top: 0; width: 1px; height: 18px; background: #9a9a9a; }
.sep-wide { width: 9px; }
.group { display: flex; width: 92px; background: #b3d7f3; outline: 1px solid #99d1ff; outline-offset: -1px; }
.svg-a { font: bold 14px "Liberation Serif", serif; fill: #111; }

.head { height: 23px; flex: none; display: grid; grid-template-columns: 46px 99px 36px 170px 1fr; background: #fff; line-height: 23px; color: #333; }
.head > span { border-right: 1px solid #e4e4e4; overflow: hidden; white-space: nowrap; }
.head > span:last-child { border-right: 0; }
.h-time { padding-left: 5px; }
.h-proc { padding-left: 6px; }
.h-pid { text-align: right; padding-right: 2px; }
.h-op { padding-left: 6px; }
.h-path { padding-left: 7px; }

.list { flex: 1; overflow: hidden; }
.rows { margin-top: -5px; }
.row { height: 15px; display: grid; grid-template-columns: 46px 99px 36px 170px 1fr; white-space: nowrap; color: #222; }
.row > span { overflow: hidden; padding-top: 1px; }
.row.b { font-weight: 700; font-size: 12px; color: #000; }
.row.hl { background: #f0f0f0; }
.time { padding-left: 1px; }
.proc, .op { display: flex; align-items: center; letter-spacing: -.32px; }
.row > .proc, .row > .op { padding-top: 2px; }
.row.b .proc { letter-spacing: -.2px; }
.row.b .op { letter-spacing: -.2px; }
.row.b .path { letter-spacing: .06px; }
.row.b .tail { letter-spacing: -.2px; }
.row.b .time { font-size: 11px; }
.proc { padding-left: 1px; }
.op { padding-left: 5px; }
.pid { text-align: right; padding-right: 1px; }
.path { padding-left: 1px; }
.tail { width: 464px; text-align: right; }
.ic-p { width: 14px; height: 11px; flex: none; margin-right: 2px; }
.ic-o { width: 15px; height: 15px; flex: none; margin-right: 1px; }
.dither { position: relative; display: flex; align-items: center; height: 15px; flex: none; }
.dither::after { content: ""; position: absolute; left: 0; top: 0; right: 1px; bottom: 0; background: repeating-conic-gradient(#2b7de0 0 25%, transparent 0 50%) 0 0 / 2px 2px; }

.mosaic { position: absolute; left: 340px; top: 40px; width: 360px; height: 135px; }

/* Dialogs */
.win { position: absolute; background: #f0f0f0; border: 1px solid #a0a0a0; overflow: hidden; display: flex; flex-direction: column; }
.w1 { left: 890px; top: 3px; width: 560px; height: 817px; }
.w2 { left: 353px; top: 410px; width: 844px; height: 420px; border-color: #5a5a5a; box-shadow: 0 0 2px rgba(0,0,0,.2); }
.titlebar { height: 30px; flex: none; background: #fff; display: flex; align-items: center; padding-left: 8px; font-size: 12px; color: #111; }
.titlebar.inactive { color: #8a8a8a; }
.ti { width: 15px; height: 13px; margin-right: 6px; flex: none; }
.controls { margin-left: auto; margin-right: -3px; display: flex; }
.ctl { width: 46px; height: 30px; display: flex; align-items: center; justify-content: center; }
.gl { width: 10px; height: 10px; display: block; }
.body { flex: 1; padding: 11px 11px 13px 12px; display: flex; flex-direction: column; min-height: 0; }
.tabs { display: flex; align-items: flex-end; height: 21px; flex: none; position: relative; z-index: 1; padding-left: 1px; margin-bottom: -1px; }
.tab { height: 19px; border: 1px solid #d9d9d9; border-bottom: 0; border-right: 0; background: #f0f0f0; text-align: center; line-height: 18px; color: #222; }
.t-ev { width: 41px; }
.t-pr { width: 48px; }
.t-st { width: 45px; }
.tab.active { height: 22px; background: #fff; border-right: 1px solid #d9d9d9; line-height: 20px; padding-bottom: 2px; }
.panel { flex: 1; min-height: 0; background: #fff; border: 1px solid #d9d9d9; padding: 11px 13px 30px; }
.w2 .panel { padding-bottom: 0; }
.slist { height: 100%; border: 1px solid #828790; background: #fff; display: flex; flex-direction: column; overflow: hidden; }
.slist.with-bar { flex-direction: row; }
.main { flex: 1; min-width: 0; overflow: hidden; }
.shead { height: 26px; flex: none; display: grid; align-items: center; color: #333; }
.shead > span { height: 24px; line-height: 24px; border-right: 1px solid #e4e4e4; padding-left: 6px; white-space: nowrap; }
.shead > span:first-child { padding-left: 7px; }
.shead > span:last-child { border-right: 0; }
.srows { flex: 1; overflow: hidden; min-height: 0; }
.srow { height: 17px; line-height: 17px; display: grid; white-space: pre; color: #222; }
.srow > span { padding: 1px 0 0 6px; overflow: hidden; }
.srow > span:first-child { padding-left: 8px; }
.srow > span:nth-child(2), .srow > span:nth-child(3) { letter-spacing: -.25px; }
.w1 .shead, .w1 .srow { grid-template-columns: 46px 96px 1fr; }
.w2 .shead, .w2 .srow { grid-template-columns: 46px 96px 337px 103px 1fr; }
.k, .u { display: inline-block; width: 15px; font-size: 14px; line-height: 17px; vertical-align: top; letter-spacing: 0; }
.k { color: #f0f; }
.u { color: #00f; }
.srow > span.clip { padding-left: 138px; }
.hscroll { height: 15px; margin-bottom: 2px; flex: none; background: #c8c8c8; }
.vscroll { width: 17px; flex: none; background: #f0f0f0; display: flex; flex-direction: column; }
.up { height: 18px; display: flex; align-items: center; justify-content: center; flex: none; }
.chev { width: 9px; height: 6px; }
.thumb { height: 287px; background: #c8c8c8; flex: none; }

/* Annotations */
.marks { position: absolute; left: 0; top: 0; width: 1377px; height: 819px; pointer-events: none; }
.box { fill: none; stroke: #fb2a20; stroke-width: 3; }
.arrow { fill: #fb2a20; }
```
